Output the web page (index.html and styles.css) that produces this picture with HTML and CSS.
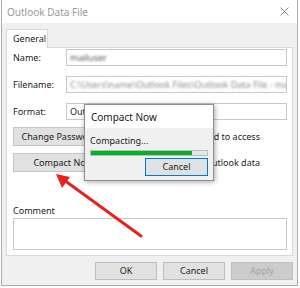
FILE: index.html
```html
<!DOCTYPE html>
<html>
<head>
<meta charset="utf-8">
<link rel="stylesheet" href="styles.css">
</head>
<body>
<div class="window">
  <div class="titlebar">
    <span class="title">Outlook Data File</span>
    <svg class="close" width="9" height="9" viewBox="0 0 9 9"><path d="M0.5 0.5 L8.5 8.5 M8.5 0.5 L0.5 8.5" stroke="#8a8a8a" stroke-width="1"/></svg>
  </div>
  <div class="body">
    <div class="tab">General</div>
    <div class="panel">
      <div class="field first">
        <span class="label">Name:</span>
        <div class="input"><span class="blur dark">mailuser</span></div>
      </div>
      <div class="field second">
        <span class="label">Filename:</span>
        <div class="input"><span class="blur">C:\Users\name\Outlook Files\Outlook Data File - mailuser.pst</span></div>
      </div>
      <div class="field third">
        <span class="label">Format:</span>
        <div class="input"><span class="val">Outlook Data File (.pst)</span></div>
      </div>
      <div class="action first-action">
        <div class="btn side">Change Password...</div>
        <div class="desc">password used to access</div>
      </div>
      <div class="action">
        <div class="btn side">Compact Now</div>
        <div class="desc">size of your Outlook data</div>
      </div>
      <div class="comment-label">Comment</div>
      <div class="comment"></div>
    </div>
    <div class="footer">
      <div class="btn foot">OK</div>
      <div class="btn foot">Cancel</div>
      <div class="btn foot disabled">Apply</div>
    </div>
  </div>
</div>

<div class="popup">
  <div class="ptitle">Compact Now</div>
  <div class="pbody">
    <div class="pstatus">Compacting...</div>
    <div class="progress"><div class="fill" style="width:87%"></div></div>
    <div class="prow"><div class="btn pcancel">Cancel</div></div>
  </div>
</div>

<svg class="arrow" width="300" height="288" viewBox="0 0 300 288">
  <line x1="141" y1="236" x2="64" y2="180" stroke="#e8231f" stroke-width="3" stroke-linecap="round"/>
  <polygon points="56,174 70,177 62,188" fill="#e8231f"/>
</svg>
</body>
</html>
```
FILE: styles.css
```css
html, body {
  margin: 0;
  padding: 0;
  background: #ffffff;
}
body {
  width: 300px;
  height: 288px;
  overflow: hidden;
  font-family: "Noto Sans", "Open Sans", sans-serif;
  color: #1a1a1a;
  font-size: 9px;
}
.window {
  margin-left: 1px;
  width: 297px;
  height: 286px;
  box-sizing: border-box;
  border: 1px solid #ababab;
  border-top: none;
  display: flex;
  flex-direction: column;
}
.titlebar {
  height: 23px;
  background: #ffffff;
  display: flex;
  align-items: center;
  justify-content: space-between;
  padding: 0 8px 0 5px;
  flex-shrink: 0;
}
.title {
  font-size: 10px;
  color: #9a9a9a;
}
.close { display: block; }
.body {
  flex: 1;
  background: #f0f0f0;
  padding: 6px 4px 0 4px;
  display: flex;
  flex-direction: column;
}
.tab {
  width: 42px;
  height: 19px;
  box-sizing: border-box;
  border: 1px solid #d9d9d9;
  border-bottom: none;
  background: #ffffff;
  padding-left: 6px;
  line-height: 18px;
  margin-bottom: -1px;
  position: relative;
  z-index: 1;
}
.panel {
  height: 209px;
  box-sizing: border-box;
  border: 1px solid #d9d9d9;
  background: #ffffff;
  padding: 1px 5px 0 6px;
  display: flex;
  flex-direction: column;
}
.field {
  display: grid;
  grid-template-columns: 53px 1fr;
  align-items: center;
}
.second { margin-top: 10px; }
.third { margin-top: 10px; }
.input {
  height: 17px;
  box-sizing: border-box;
  border: 1px solid #c8c8c8;
  padding-left: 3px;
  line-height: 15px;
  overflow: hidden;
  white-space: nowrap;
}
.blur {
  filter: blur(0.9px);
  color: #8c8c8c;
}
.blur.dark { color: #555; }
.val { color: #1a1a1a; }
.action {
  display: flex;
  align-items: center;
  margin-top: 7px;
}
.first-action { margin-top: 7px; }
.btn {
  box-sizing: border-box;
  border: 1px solid #c4c4c4;
  background: #e1e1e1;
  text-align: center;
  color: #1a1a1a;
}
.side {
  width: 100px;
  height: 19px;
  line-height: 17px;
  flex-shrink: 0;
}
.desc {
  flex: 1;
  padding-right: 27px;
  white-space: nowrap;
  text-align: right;
  overflow: hidden;
}
.comment-label {
  margin-top: 33px;
  line-height: 12px;
}
.comment {
  margin-top: 1px;
  height: 32px;
  box-sizing: border-box;
  border: 1px solid #c8c8c8;
}
.footer {
  display: flex;
  justify-content: flex-end;
  gap: 6px;
  margin-top: 6px;
}
.foot {
  width: 62px;
  height: 18px;
  line-height: 16px;
  border-color: #bdbdbd;
}
.disabled {
  background: #cccccc;
  color: #a3a3a3;
  border-color: #bfbfbf;
}
.popup {
  position: absolute;
  left: 84px;
  top: 104px;
  width: 130px;
  height: 77px;
  box-sizing: border-box;
  border: 1px solid #8e8e8e;
  box-shadow: 1px 1px 5px rgba(0, 0, 0, 0.35);
  display: flex;
  flex-direction: column;
}
.ptitle {
  height: 23px;
  background: #ffffff;
  font-size: 10px;
  line-height: 24px;
  padding-left: 6px;
  color: #1a1a1a;
}
.pbody {
  flex: 1;
  background: #f0f0f0;
  padding: 7px 5px 0 5px;
}
.pstatus {
  line-height: 12px;
}
.progress {
  margin-top: 3px;
  height: 6px;
  box-sizing: border-box;
  border: 1px solid #bcbcbc;
  background: #e6e6e6;
}
.fill {
  height: 100%;
  background: #06b025;
}
.prow {
  display: flex;
  justify-content: flex-end;
  margin-top: 2px;
}
.pcancel {
  width: 63px;
  height: 18px;
  line-height: 16px;
  border-color: #0078d7;
}
.arrow {
  position: absolute;
  left: 0;
  top: 0;
  pointer-events: none;
}
```
